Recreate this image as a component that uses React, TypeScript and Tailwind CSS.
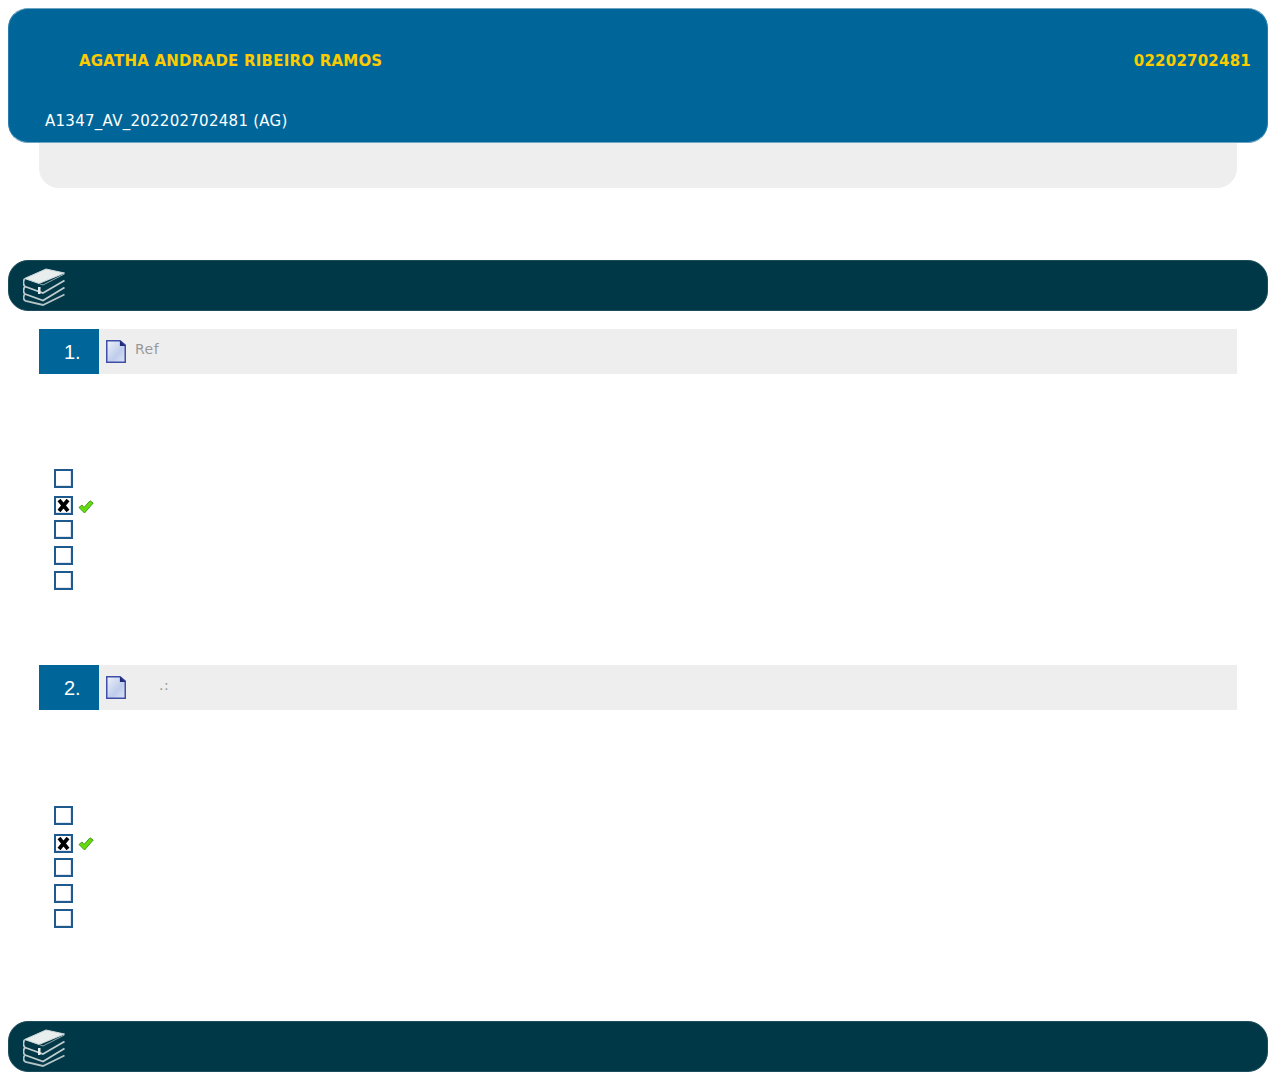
const font = { fontFamily: '"DejaVu Sans", Verdana, sans-serif' };

function Books() {
  return (
    <svg width="46" height="40" viewBox="0 0 46 40" fill="none" className="shrink-0 blur-[0.4px]">
      <path d="M1.500 12.500 L23 3 L41.500 7 L16 17.500 Z" fill="#e8eeee" stroke="#cdd8da" strokeWidth="1" strokeLinejoin="round" />
      <path d="M1.500 13 C0 15.500 0 19 2 20.500 L20 27 L41.500 14.500" stroke="#c0cdd0" strokeWidth="1.800" />
      <path d="M2 20.500 C0 23 0 26.500 2 28 L20 34.500 L41.500 21.500" stroke="#c0cdd0" strokeWidth="1.800" />
      <path d="M2 28 C0 30.500 0 33.500 2.500 35 L20 39 L41.500 28.500" stroke="#b4c3c6" strokeWidth="1.800" />
      <path d="M16 17.500 L20 19 L41.500 8" stroke="#8fa6ab" strokeWidth="1" />
      <rect x="15" y="21" width="2.500" height="7" fill="#e6eced" />
    </svg>
  );
}

function Doc() {
  return (
    <svg width="20" height="23" viewBox="0 0 20 23" className="shrink-0 blur-[0.3px]">
      <defs>
        <linearGradient id="docfill" x1="0" y1="0" x2="1" y2="1">
          <stop offset="0" stopColor="#eef2fb" />
          <stop offset="0.6" stopColor="#bfcdec" />
          <stop offset="1" stopColor="#dbe3f5" />
        </linearGradient>
      </defs>
      <path d="M0.750 0.750 H14 L19.250 5 V22.250 H0.750 Z" fill="url(#docfill)" stroke="#3f4fa8" strokeWidth="1.500" />
      <path d="M14.500 1 V5.500 H19" fill="#1f2c7a" stroke="#1f2c7a" strokeWidth="1.200" />
    </svg>
  );
}

function Box({ checked, className, tickClass }: { checked?: boolean; className: string; tickClass?: string }) {
  return (
    <div className={"flex items-center " + className}>
      <div className="w-[19px] h-[19px] border-2 border-[#1f5a8e] bg-white shadow-[inset_-1px_-1px_0_#dfe5f0] flex items-center justify-center">
        {checked && (
          <svg width="13" height="13" viewBox="0 0 13 13" className="blur-[0.25px]">
            <path d="M2 1 L11 12 M11 1 L2 12" stroke="#000" strokeWidth="3.800" />
          </svg>
        )}
      </div>
      {checked && (
        <svg width="16" height="14" viewBox="0 0 16 14" className={"ml-[5px] " + (tickClass ?? "")}>
          <path d="M1 7.500 L4 5 L6 7.500 L12 0.800 L15.200 3 L6.500 13 Z" fill="#62dc0c" stroke="#4a9a22" strokeWidth="1" strokeLinejoin="round" />
        </svg>
      )}
    </div>
  );
}

function DarkBar({ className }: { className?: string }) {
  return (
    <div className={"mx-2 h-[51px] rounded-[20px] bg-[#003847] border border-[#1d4d5c] flex items-center pl-[14px] " + (className ?? "")}>
      <Books />
    </div>
  );
}

function Row({ n, children }: { n: string; children?: React.ReactNode }) {
  return (
    <div className="mx-[39px] h-[45px] bg-[#eeeeee] flex">
      <div className="w-[60px] h-full bg-[#006699] text-white text-[20px] pl-[25px] pt-[8px] leading-[30px] font-['Liberation_Sans',sans-serif]">{n}</div>
      <div className="pl-[7px] pt-[11px] shrink-0"><Doc /></div>
      {children}
    </div>
  );
}

function Options({ className, gap, tickClass }: { className: string; gap: string; tickClass: string }) {
  return (
    <div className={"pl-[54px] " + className}>
      <Box className="" />
      <Box checked className={gap} tickClass={tickClass} />
      <Box className="mt-[5px]" />
      <Box className="mt-[7px]" />
      <Box className="mt-[6px]" />
    </div>
  );
}

export default function App() {
  return (
    <div className="bg-white pt-2 w-[1276px] h-[1075px] overflow-hidden" style={font}>
      <div className="mx-2 h-[135px] rounded-[20px] bg-[#006699] border border-[#2a7dab] border-t-[#6fa3c2] border-b-[#6fa3c2] relative z-10 flex flex-col -mb-px">
        <div className="flex justify-between pl-[70px] pr-[16px] pt-[42px] text-[15px] leading-5 font-bold text-[#fdcb00] tracking-[0.22px]">
          <span>AGATHA ANDRADE RIBEIRO RAMOS</span>
          <span>02202702481</span>
        </div>
        <div className="pl-[36px] mt-[40px] text-[15px] leading-5 text-white tracking-[0.27px]">A1347_AV_202202702481 (AG)</div>
      </div>
      <div className="mx-[39px] h-[46px] bg-[#eeeeee] rounded-b-[20px]" />
      <DarkBar className="mt-[72px]" />
      <div className="h-[18px]" />
      <Row n="1.">
        <span className="pl-[9px] pt-[12px] text-[14px] leading-[17px] text-[#999999] tracking-[0.5px]">Ref</span>
      </Row>
      <Options className="mt-[95px]" gap="mt-[8px]" tickClass="mt-[2px]" />
      <div className="h-[75px]" />
      <Row n="2.">
        <span className="pl-[33px] pt-[12px] text-[14px] leading-[17px] text-[#999999] tracking-[0.5px]">.:</span>
      </Row>
      <Options className="mt-[96px]" gap="mt-[9px]" tickClass="mt-0" />
      <DarkBar className="mt-[93px]" />
    </div>
  );
}
